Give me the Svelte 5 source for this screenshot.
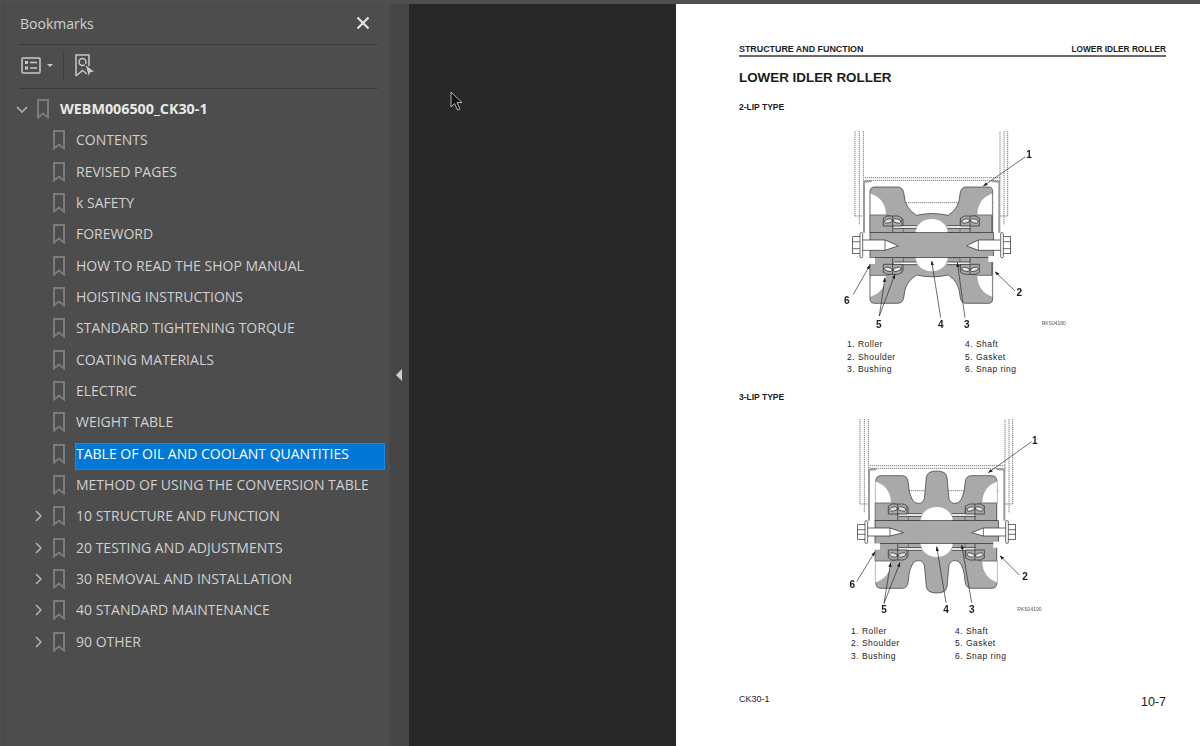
<script>
  const items = [
    { label: "CONTENTS" },
    { label: "REVISED PAGES" },
    { label: "k SAFETY" },
    { label: "FOREWORD" },
    { label: "HOW TO READ THE SHOP MANUAL" },
    { label: "HOISTING INSTRUCTIONS" },
    { label: "STANDARD TIGHTENING TORQUE" },
    { label: "COATING MATERIALS" },
    { label: "ELECTRIC" },
    { label: "WEIGHT TABLE" },
    { label: "TABLE OF OIL AND COOLANT QUANTITIES", selected: true },
    { label: "METHOD OF USING THE CONVERSION TABLE" },
    { label: "10 STRUCTURE AND FUNCTION", closed: true },
    { label: "20 TESTING AND ADJUSTMENTS", closed: true },
    { label: "30 REMOVAL AND INSTALLATION", closed: true },
    { label: "40 STANDARD MAINTENANCE", closed: true },
    { label: "90 OTHER", closed: true }
  ];

  const parts = [
    ["1.", "Roller", "4.", "Shaft"],
    ["2.", "Shoulder", "5.", "Gasket"],
    ["3.", "Bushing", "6.", "Snap ring"]
  ];

  // coordinates are 3x screen pixels, measured from the crop of each figure
  const figures = [
    {
      title: "2-LIP TYPE",
      cls: "two",
      height: 651,
      dx: 0,
      dy: 0,
      mirror: 745,
      roller:
        "M150 212 Q150 198 165 198 L232 198 Q250 198 252 220 Q254 262 290 283 Q335 272 385 283 Q418 262 420 220 Q422 198 438 198 L505 198 Q518 198 518 212 L518 335 L150 335 Z",
      leaders: [
        [615, 108, 490, 195],
        [585, 510, 525, 452],
        [100, 520, 150, 432],
        [178, 585, 195, 470],
        [178, 585, 225, 460],
        [362, 590, 335, 420],
        [435, 590, 412, 425]
      ],
      labels: [
        ["1", 627, 112],
        ["2", 598, 524],
        ["6", 80, 548],
        ["5", 176, 620],
        ["4", 362, 620],
        ["3", 440, 620]
      ],
      code: ["RKS04180", 665, 612]
    },
    {
      title: "3-LIP TYPE",
      cls: "three",
      height: 645,
      dx: 15,
      dy: -3,
      mirror: 738,
      roller:
        "M153 215 Q153 200 168 200 L232 200 Q248 200 250 222 Q252 262 268 280 Q290 290 298 270 L304 205 Q306 186 335 186 Q364 186 366 205 L372 270 Q380 290 402 280 Q418 262 420 222 Q422 200 438 200 L500 200 Q515 200 515 215 L515 335 L153 335 Z",
      leaders: [
        [635, 95, 505, 188],
        [598, 495, 540, 437],
        [110, 515, 165, 425],
        [192, 580, 212, 458],
        [192, 580, 240, 458],
        [378, 578, 350, 410],
        [455, 578, 425, 405]
      ],
      labels: [
        ["1", 644, 102],
        ["2", 615, 511],
        ["6", 97, 535],
        ["5", 192, 608],
        ["4", 378, 608],
        ["3", 455, 608]
      ],
      code: ["RKS04190", 592, 604]
    }
  ];
</script>

{#snippet bookmark()}
  <svg class="mark" viewBox="0 0 12 20"><path d="M1 1H11V18.5L6 14.5L1 18.5Z" /></svg>
{/snippet}

{#snippet halfRoller(fig)}
  <path class="metal" d={fig.roller} />
  <path class="void" d="M151 216Q198 232 200 282L151 282Z" />
  <path class="void" d="M517 216Q472 232 470 282L517 282Z" />
  <path class="shoulder" d="M150 282H200L250 296V336H150ZM420 296L470 282H515V336H420Z" />
  <ellipse class="hole" cx="335" cy="336" rx="48" ry="42" />
  <path class="hole" d="M222 315H290V321H222ZM382 315H452V321H382Z" />
  <path class="thin" d="M222 314H290M382 314H452M222 322H290M382 322H452" />
  {#each [190, 422] as x}
    <g transform="translate({x} 285)">
      <path class="seat" d="M0 6L12 0H44L56 6V30H0Z" />
      <ellipse class="bow" cx="15" cy="15" rx="12" ry="6" transform="rotate(-14 15 15)" />
      <ellipse class="bow" cx="41" cy="15" rx="12" ry="6" transform="rotate(14 41 15)" />
      <path class="thin" d="M28 0V50" />
    </g>
  {/each}
{/snippet}

<div class="app">
  <div class="rail"></div>

  <aside class="panel">
    <header class="head">
      <span>Bookmarks</span>
      <svg class="close" viewBox="0 0 14 14"><path d="M1.5 1.5L12.5 12.5M12.5 1.5L1.5 12.5" /></svg>
    </header>
    <div class="tools">
      <svg class="options" viewBox="0 0 20 17">
        <rect x="1" y="1" width="18" height="15" rx="1" />
        <path d="M9 5.5H16M9 11H16" />
        <path class="dots" d="M4 4H7V7H4ZM4 9.500H7V12.500H4Z" />
      </svg>
      <svg class="caret" viewBox="0 0 6 3"><path d="M0 0H6L3 3Z" /></svg>
      <i class="sep"></i>
      <svg class="find" viewBox="0 0 21 24">
        <path d="M1 22V1H14V12" />
        <path d="M1 22L7.500 16.500L12 20" />
        <circle cx="7.500" cy="8" r="3.500" />
        <path class="fill" d="M10 10L20 18L15.500 18.500L13.500 23Z" />
      </svg>
    </div>
    <div class="tree">
      <div class="row root">
        <span class="twist">
          <svg viewBox="0 0 12 7"><path d="M1 1L6 6L11 1" /></svg>
        </span>
        {@render bookmark()}
        <span class="label">WEBM006500_CK30-1</span>
      </div>
      {#each items as item}
        <div class="row">
          <span class="twist">
            {#if item.closed}
              <svg class="open" viewBox="0 0 7 12"><path d="M1 1L6 6L1 11" /></svg>
            {/if}
          </span>
          {@render bookmark()}
          <span class="label" class:selected={item.selected}>{item.label}</span>
        </div>
      {/each}
    </div>
  </aside>

  <div class="splitter"><i></i></div>

  <div class="gap">
    <svg class="cursor" viewBox="0 0 14 20">
      <path d="M1 1V16L4.500 12.500L7.500 19L10 18L7 11.500H12Z" />
    </svg>
  </div>

  <main class="page">
    <div class="running">
      <span class="chapter">STRUCTURE AND FUNCTION</span>
      <span class="topic">LOWER IDLER ROLLER</span>
    </div>
    <h1>LOWER IDLER ROLLER</h1>

    {#each figures as fig, i}
      <h2 class={fig.cls}>{fig.title}</h2>
      <svg class="figure {fig.cls}" viewBox="0 0 780 {fig.height}" style:height="{fig.height / 3}px">
        <defs>
          <marker id="tip-{i}" markerWidth="14" markerHeight="10" refX="13" refY="5" orient="auto" markerUnits="userSpaceOnUse">
            <path d="M0 0L14 5L0 10Z" fill="#222" />
          </marker>
        </defs>
        <g transform="translate({fig.dx} {fig.dy})">
          <path class="dash" d="M105 30V285M118 30V310M130 30V180M540 180V30M552 30V310M563 30V285" />
          <path class="dash" d="M135 170H540M135 178H540M150 245H520M105 285H130M540 285H563" />
          <path class="bracket" d="M132 335V182L155 180M538 335V182L515 180" />

          {@render halfRoller(fig)}
          <g transform="translate(0 {fig.mirror}) scale(1 -1)">
            {@render halfRoller(fig)}
          </g>

          <rect class="metal" x="150" y="335" width="370" height={fig.mirror - 670} />
          <path class="hole edge" d="M125 357H195L235 {fig.mirror / 2 + 2}L195 {fig.mirror - 357}H125Z" />
          <path class="hole edge" d="M545 357H475L440 {fig.mirror / 2 + 2}L475 {fig.mirror - 357}H545Z" />
          <path class="thin" d="M195 357V{fig.mirror - 357}M475 357V{fig.mirror - 357}" />

          <rect class="hole edge" x="98" y="347" width="27" height={fig.mirror - 694} />
          <rect class="hole edge" x="545" y="347" width="27" height={fig.mirror - 694} />
          <path class="thin" d="M98 362H125M98 {fig.mirror - 362}H125M545 362H572M545 {fig.mirror - 362}H572" />
          <rect class="hole edge" x="120" y="335" width="8" height={fig.mirror - 670} rx="3" />
          <rect class="hole edge" x="542" y="335" width="8" height={fig.mirror - 670} rx="3" />
          <path class="hole" d="M135 {fig.mirror - 335}H165V{fig.mirror - 316}H135ZM505 {fig.mirror - 340}H530V{fig.mirror - 322}H505Z" />
        </g>

        {#each fig.leaders as [x1, y1, x2, y2]}
          <line class="leader" {x1} {y1} {x2} {y2} marker-end="url(#tip-{i})" />
        {/each}
        {#each fig.labels as [text, x, y]}
          <text class="callout" {x} {y}>{text}</text>
        {/each}
        <text class="code" x={fig.code[1]} y={fig.code[2]}>{fig.code[0]}</text>
      </svg>
      <div class="legend {fig.cls}">
        {#each parts as [n1, name1, n2, name2]}
          <div class="part"><span>{n1}</span>{name1}</div>
          <div class="part"><span>{n2}</span>{name2}</div>
        {/each}
      </div>
    {/each}

    <footer>
      <span class="model">CK30-1</span>
      <span class="folio">10-7</span>
    </footer>
  </main>
</div>

<style>
  :global(body) {
    margin: 0;
    background: #505050;
  }

  .app {
    display: flex;
    box-sizing: border-box;
    width: 1200px;
    height: 746px;
    padding-top: 4px;
    overflow: hidden;
    background: #4f4f4f;
    font-family: "Open Sans", "Noto Sans", sans-serif;
  }

  .rail {
    width: 4px;
    flex: none;
    background: #4b4b4b;
    border-right: 1px solid #434343;
  }

  .panel {
    box-sizing: border-box;
    width: 386px;
    flex: none;
    background: #4d4d4d;
    border-right: 1px solid #444;
  }

  .head {
    display: flex;
    align-items: center;
    justify-content: space-between;
    box-sizing: border-box;
    height: 41px;
    margin: 0 12px 0 14px;
    padding: 0 8px 2px 1px;
    border-bottom: 1px solid #3c3c3c;
    color: #cfcfcf;
    font-size: 14px;
  }

  .close {
    width: 14px;
    height: 14px;
    fill: none;
    stroke: #e2e2e2;
    stroke-width: 2.2;
  }

  .tools {
    display: flex;
    align-items: center;
    box-sizing: border-box;
    height: 44px;
    margin: 0 12px 0 14px;
    padding: 0 0 2px 2px;
    border-bottom: 1px solid #3c3c3c;
  }

  .options {
    width: 20px;
    height: 17px;
    fill: none;
    stroke: #c9c9c9;
    stroke-width: 1.5;
  }

  .options .dots {
    fill: #c9c9c9;
    stroke: none;
  }

  .caret {
    width: 6px;
    height: 3px;
    margin-left: 6px;
    fill: #c9c9c9;
  }

  .sep {
    width: 1px;
    height: 28px;
    margin: 0 11px 0 10px;
    background: #404040;
  }

  .find {
    width: 21px;
    height: 24px;
    margin-top: 1px;
    fill: none;
    stroke: #c9c9c9;
    stroke-width: 1.5;
  }

  .find .fill {
    fill: #c9c9c9;
    stroke: #4d4d4d;
    stroke-width: 1;
  }

  .tree {
    padding-top: 9px;
  }

  .row {
    display: flex;
    align-items: flex-start;
    box-sizing: border-box;
    height: 31.34px;
    padding: 0 5px 0 27px;
    color: #d0d0d0;
    font-size: 14px;
    line-height: 22px;
  }

  .row.root {
    padding-left: 11px;
    color: #e8e8e8;
    font-size: 14.3px;
    font-weight: 700;
  }

  .twist {
    display: flex;
    align-items: center;
    width: 21px;
    height: 22px;
    flex: none;
  }

  .twist svg {
    width: 12px;
    height: 7px;
    fill: none;
    stroke: #b5b5b5;
    stroke-width: 1.5;
  }

  .twist svg.open {
    width: 7px;
    height: 12px;
    margin-left: 3px;
  }

  .mark {
    width: 12px;
    height: 20px;
    flex: none;
    margin-top: 1px;
    fill: none;
    stroke: #7b7b7b;
    stroke-width: 2;
  }

  .label {
    flex: 1;
    height: 27px;
    margin-left: 11px;
    white-space: nowrap;
  }

  .label.selected {
    margin-left: 10px;
    padding-left: 1px;
    background: #0078d7;
    color: #fff;
    outline: 1px dotted #5f8fb5;
    outline-offset: -1px;
  }

  .splitter {
    display: flex;
    align-items: center;
    justify-content: center;
    width: 18px;
    flex: none;
    box-sizing: border-box;
    background: #464646;
  }

  .splitter i {
    width: 0;
    height: 0;
    margin-right: 2px;
    border: solid transparent;
    border-width: 6px 6px 6px 0;
    border-right-color: #cfcfcf;
  }

  .gap {
    position: relative;
    width: 267px;
    flex: none;
    background: #282828;
  }

  .cursor {
    position: absolute;
    left: 41px;
    top: 87px;
    width: 14px;
    height: 20px;
    fill: #111;
    stroke: #b4b4b4;
    stroke-width: 1;
  }

  .page {
    display: flex;
    flex-direction: column;
    box-sizing: border-box;
    flex: 1;
    padding: 40px 34px 0 63px;
    background: #fff;
    color: #1c1c1c;
    font-family: "Liberation Sans", Arial, sans-serif;
  }

  .running {
    display: flex;
    justify-content: space-between;
    height: 11px;
    border-bottom: 2px solid #6a6a6a;
    font-weight: 700;
    line-height: 10px;
  }

  .chapter {
    font-size: 8.9px;
  }

  .topic {
    font-size: 8.3px;
  }

  h1 {
    margin: 12px 0 0;
    font-size: 13.4px;
    line-height: 18px;
  }

  h2 {
    margin: 0;
    font-size: 8.5px;
    line-height: 10px;
  }

  h2.two {
    margin-top: 15px;
  }

  h2.three {
    margin-top: 16px;
  }

  .figure {
    display: block;
    width: 260px;
    flex: none;
    margin-left: 81px;
    filter: blur(0.35px);
  }

  .figure.two {
    margin-top: 9px;
  }

  .figure.three {
    margin-top: 8px;
  }

  .metal {
    fill: #a9a9a9;
    stroke: #2c2c2c;
    stroke-width: 2;
  }

  .shoulder {
    fill: #a9a9a9;
    stroke: #3a3a3a;
    stroke-width: 1.5;
  }

  .void {
    fill: #fff;
    stroke: #555;
    stroke-width: 1;
  }

  .hole {
    fill: #fff;
  }

  .hole.edge {
    stroke: #222;
    stroke-width: 2;
  }

  .seat {
    fill: #a9a9a9;
    stroke: #222;
    stroke-width: 2;
  }

  .bow {
    fill: #e4e4e4;
    stroke: #222;
    stroke-width: 2;
  }

  .thin {
    fill: none;
    stroke: #222;
    stroke-width: 2;
  }

  .dash {
    fill: none;
    stroke: #6e6e6e;
    stroke-width: 2.5;
    stroke-dasharray: 4 2;
  }

  .bracket {
    fill: none;
    stroke: #9a9a9a;
    stroke-width: 6;
  }

  .leader {
    stroke: #222;
    stroke-width: 2;
  }

  .callout {
    fill: #1c1c1c;
    font-size: 30px;
    font-weight: 700;
    text-anchor: middle;
  }

  .code {
    fill: #555;
    font-size: 15px;
  }

  .legend {
    display: grid;
    flex: none;
    font-size: 8.5px;
    letter-spacing: 0.45px;
    line-height: 12.5px;
  }

  .legend.two {
    grid-template-columns: 118px 100px;
    margin-left: 108px;
  }

  .legend.three {
    grid-template-columns: 104px 100px;
    margin-left: 112px;
  }

  .part {
    white-space: nowrap;
  }

  .part span {
    display: inline-block;
    width: 11px;
  }

  footer {
    display: flex;
    justify-content: space-between;
    align-items: flex-start;
    margin-top: 31px;
  }

  .model {
    font-size: 9px;
    line-height: 12px;
  }

  .folio {
    padding-top: 1px;
    font-size: 12.5px;
    line-height: 16px;
  }
</style>
